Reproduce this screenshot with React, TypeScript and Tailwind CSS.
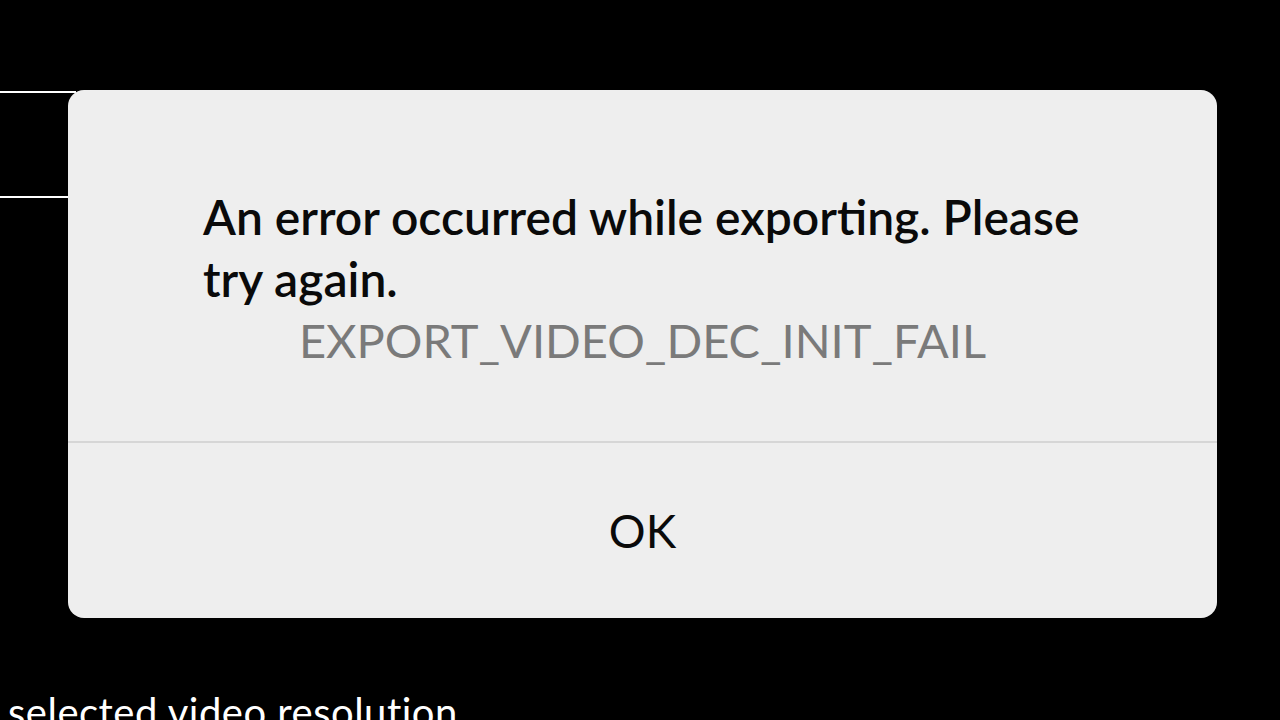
export default function App() {
  return (
    <div
      className="relative w-screen h-screen overflow-hidden bg-black"
      style={{ fontFamily: 'Lato, "Noto Sans", sans-serif' }}
    >
      {/* Scene behind the dialog */}
      <div className="flex h-full flex-col justify-between">
        <div className="pt-[91px]">
          <div className="h-[107px] w-[76px] border-y-2 border-white" />
        </div>
        <div className="pl-[8px] text-[40px] leading-none text-white translate-y-[12px] tracking-[0.5px]">
          selected video resolution
        </div>
      </div>

      {/* Error dialog */}
      <div className="absolute left-[68px] top-[90px] flex h-[528px] w-[1149px] flex-col rounded-[16px] bg-[#eeeeee]">
        <div className="flex h-[353px] flex-col border-b-2 border-[#d6d6d6] pt-[96px]">
          <p className="pl-[135px] text-[48px] font-semibold leading-[62px] text-[#0a0a0a]">
            An error occurred while exporting. Please
            <br />
            try again.
          </p>
          <p className="text-center text-[47px] leading-[60px] text-[#7a7a7a]">
            EXPORT_VIDEO_DEC_INIT_FAIL
          </p>
        </div>
        <button className="flex flex-1 items-center justify-center text-[46px] text-[#0a0a0a]">
          OK
        </button>
      </div>
    </div>
  );
}
